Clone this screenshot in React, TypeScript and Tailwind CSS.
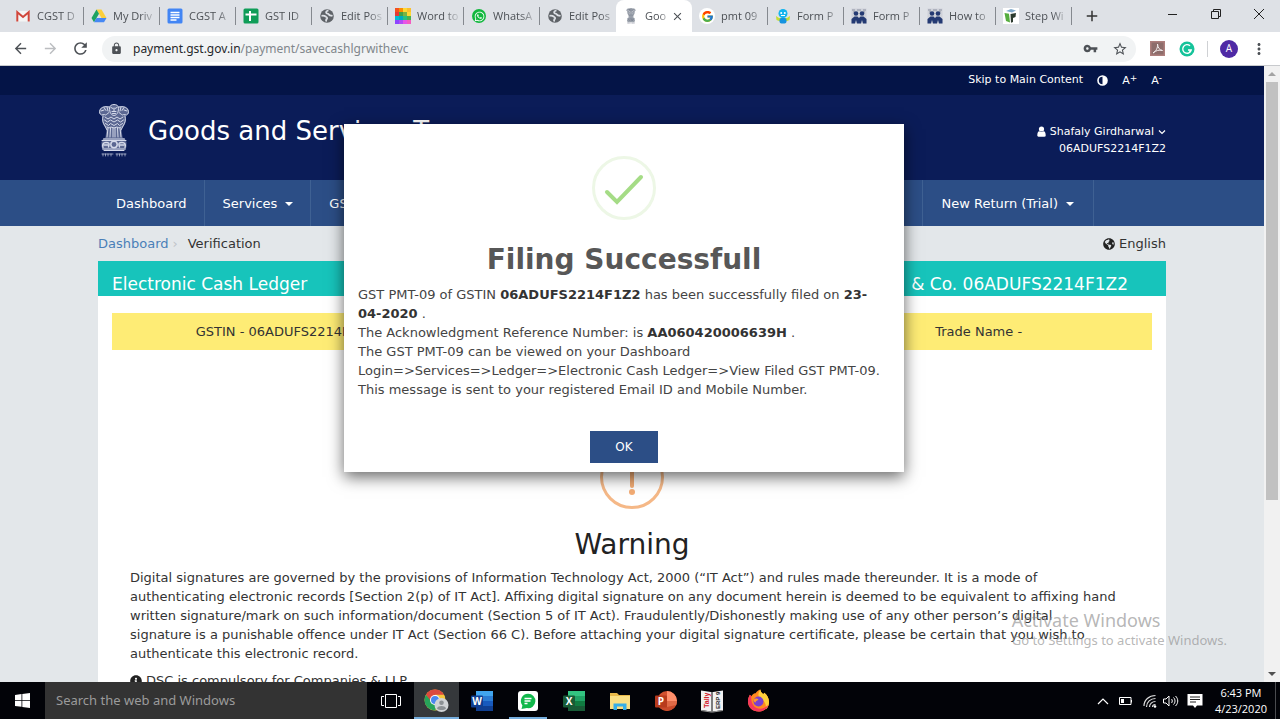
import type { ReactNode } from "react";
import {
  MdArrowBack,
  MdArrowForward,
  MdRefresh,
  MdLock,
  MdVpnKey,
  MdStarBorder,
  MdMoreVert,
  MdAdd,
  MdClose,
} from "react-icons/md";
import { FcGoogle } from "react-icons/fc";
import { FaWhatsapp, FaGlobeAmericas, FaInfoCircle } from "react-icons/fa";

/* ---------- icons ---------- */

const GmailIcon = () => (
  <svg viewBox="0 0 16 16" className="h-4 w-4">
    <path d="M1.500 3h13v10.500h-13z" fill="#f4f4f4" />
    <path d="M2.300 13.500V4.200L8 9l5.700-4.800v9.300" fill="none" stroke="#d0463b" strokeWidth="2" />
  </svg>
);

const DriveIcon = () => (
  <svg viewBox="0 0 16 16" className="h-4 w-4">
    <path d="M5.500 1.500h5l5 8.500h-5z" fill="#fbcf3b" />
    <path d="M5.500 1.500L.5 10 3 14.200l5-8.500z" fill="#1da362" />
    <path d="M3 14.200L5.500 10h10L13 14.200z" fill="#4688f4" />
  </svg>
);

const DocsIcon = () => (
  <svg viewBox="0 0 16 16" className="h-4 w-4">
    <rect x=".5" y=".5" width="15" height="15" rx="1.500" fill="#4285f4" />
    <path d="M3.500 4.500h9M3.500 7h9M3.500 9.500h9M3.500 12h6" stroke="#fff" strokeWidth="1.400" />
  </svg>
);

const SheetsIcon = () => (
  <svg viewBox="0 0 16 16" className="h-4 w-4">
    <rect x=".5" y=".5" width="15" height="15" rx="1.500" fill="#0f9d58" />
    <path d="M2.500 6.500h11M7 3v10" stroke="#fff" strokeWidth="2" />
  </svg>
);

const GlobeIcon = () => (
  <svg viewBox="0 0 16 16" className="h-4 w-4">
    <circle cx="8" cy="8" r="6.800" fill="#5f6368" />
    <path
      d="M2.500 7.800c2-.3 3.500.2 4.500 1 1.500.7 1.500 2 .3 2.600L7 13.500M9.500 2.500C7.500 3 6.500 4 7.500 5.200c1.300.6 2.200.3 2.600 1.600.9 1 2.200.6 3.400 1"
      fill="none"
      stroke="#dee1e6"
      strokeWidth="1.800"
    />
  </svg>
);

const mosaic = [
  "#f4511e", "#fb8c00", "#fdd835", "#fbc02d",
  "#e53935", "#43a047", "#7cb342", "#fdd835",
  "#00bcd4", "#00acc1", "#26c281", "#4caf50",
  "#8e44ff", "#b14cf5", "#e754e8", "#f45cc0",
];

const MosaicIcon = () => (
  <svg viewBox="0 0 16 16" className="h-4 w-4" shapeRendering="crispEdges">
    {mosaic.map((fill, i) => (
      <rect key={i} x={(i % 4) * 4} y={Math.floor(i / 4) * 4} width="4" height="4" fill={fill} />
    ))}
  </svg>
);

const WhatsAppIcon = () => (
  <span className="flex h-3.5 w-3.5 items-center justify-center rounded-full bg-[#12b83e] text-white">
    <FaWhatsapp size={11} />
  </span>
);

const GoogleIcon = () => (
  <span className="flex h-4 w-4 items-center justify-center rounded-full bg-white">
    <FcGoogle size={13} />
  </span>
);

const RobotIcon = () => (
  <svg viewBox="0 0 16 16" className="h-4 w-4">
    <path d="M1 8l3 2h8l3-2-.5 4-2.500 1h-8l-2.500-1z" fill="#c5dc34" />
    <circle cx="8" cy="5.500" r="4.500" fill="#12b4ee" />
    <rect x="4.500" y="10" width="7" height="5.500" rx="2" fill="#1593df" />
    <circle cx="6.200" cy="5" r="1" fill="#fff" />
    <circle cx="9.800" cy="5" r="1" fill="#fff" />
    <path d="M6 7.500h4" stroke="#fff" />
  </svg>
);

const PeopleIcon = () => (
  <svg viewBox="0 0 16 16" className="h-4 w-4">
    <rect x=".5" y=".5" width="15" height="15" fill="#cfd2d9" />
    <path d="M1 2h3M6 2h4M12 2h3M2 4h2M12 4h2" stroke="#8d93a3" />
    <g fill="#243a73">
      <circle cx="5" cy="5.500" r="2.300" />
      <circle cx="11" cy="5.500" r="2.300" />
      <path d="M.5 15.500V11l3-2.500h3L8 10l1.500-1.500h3l3 2.500v4.500h-3.500L11 12l-1 3.500H6L5 12l-1 3.500z" />
    </g>
  </svg>
);

const StepIcon = () => (
  <svg viewBox="0 0 16 16" className="h-4 w-4">
    <rect width="16" height="16" fill="#fff" />
    <path d="M3 3l5-2 5 1.500-4 2z" fill="#7ea8c9" />
    <path d="M1.500 5l4.500.8 1 8.700-4-1.500z" fill="#55ad3e" />
    <path d="M7.500 6l5.500-1-.5 4-2.500 1v4l-2 .8z" fill="#2c3b2f" />
  </svg>
);

const ContrastIcon = () => (
  <svg viewBox="0 0 11 11" className="h-[11px] w-[11px]">
    <circle cx="5.500" cy="5.500" r="4.500" fill="none" stroke="#fff" strokeWidth="1.600" />
    <path d="M5.500 1a4.500 4.500 0 0 1 0 9z" fill="#fff" />
  </svg>
);

const UserIcon = () => (
  <svg viewBox="0 0 9 11" className="h-[11px] w-[9px]" fill="#fff">
    <circle cx="4.500" cy="3" r="2.600" />
    <path d="M.3 9.500C.3 7 1 5.300 2.300 5.300c1.400.9 3 .9 4.400 0C8 5.300 8.700 7 8.700 9.500c0 .8-.5 1.200-1.200 1.200h-6C.8 10.700.3 10.300.3 9.500z" />
  </svg>
);

/* Four-lion emblem, used in the header and as the favicon */
const Emblem = ({ className, color }: { className: string; color: string }) => (
  <svg viewBox="0 0 32 54" className={className} fill="none" stroke={color} strokeLinecap="round">
    <path
      d="M11 2.500C12 .5 20 .5 21 2.500c4-1 8 0 9.500 3.500 1 3-.5 4.500-3 5.500 1 4 .5 8-2 11l-2 3 1 8 2.500 1.500 1.500 3v5l-2 3h-21l-2-3v-5L5 35l2.500-1.500 1-8-2-3c-2.500-3-3-7-2-11-2.500-1-4-2.500-3-5.500C3 2.500 7 1.500 11 2.500z"
      fill={color}
      fillOpacity=".4"
      stroke="none"
    />
    <g strokeWidth="1">
      <path d="M11.500 4.500c0-3 2-4 4.500-4s4.500 1 4.500 4c0 4-2 7-4.500 7s-4.500-3-4.500-7z" />
      <path d="M13 3.500l2 1M19 3.500l-2 1M14 7.500h4M14.500 9.500h3M16 4v3" />
      <path d="M11 3c-4-1-8 0-9 3-1 2-.5 4 1.500 5l3-.5C7 12 9 10 11 8.500M21 3c4-1 8 0 9 3 1 2 .5 4-1.500 5l-3-.5C25 12 23 10 21 8.500" />
      <path d="M3 7l3-1M6 3.500l2 3M29 7l-3-1M26 3.500l-2 3M9 3l1 4M23 3l-1 4" />
      <path d="M5 12c-1 4 0 7 2 10l2 4M27 12c1 4 0 7-2 10l-2 4" />
      <path d="M7 13l3 2 3-2 3 2 3-2 3 2 3-2M6.500 16l3 2 3-2 3.500 2 3.500-2 3 2 3-2M7.500 19.500l3 2 2-2 3.500 2 3.500-2 2 2 3-2M9 23l2 1 2-1 3 1 3-1 2 1 2-1" />
      <path d="M10 24l-1 9M12.500 24l-.5 9M15 24v9M17 24v9M19.500 24l.5 9M22 24l1 9" />
      <path d="M5.500 35h21M4 36.500h24M4.500 45h23M6 46.500h20" />
      <circle cx="16" cy="40.500" r="3.200" strokeWidth="1.500" />
      <path d="M5 43.500c-1-3 0-5 3-5s4 1 2.500 4.500M27 43.500c1-3 0-5-3-5s-4 1-2.500 4.500M6 41h4M26 41h-4" strokeWidth="1.400" />
    </g>
    <path
      d="M4 50h11M18 50h10M5 50v2M7.500 50v2M10 50v2M13 50v2M19 50v2M21.500 50v2M24 50v2M27 50v2"
      strokeWidth=".8"
      opacity=".8"
    />
  </svg>
);

const ChromeIcon = () => (
  <svg viewBox="0 0 26 24" className="h-6 w-7">
    <circle cx="11" cy="11" r="10.500" fill="#f4c63d" />
    <path d="M1.900 5.800A10.500 10.500 0 0 1 20.100 5.800H11L6.500 13.500z" fill="#dc4a3d" />
    <path d="M1.900 5.800A10.500 10.500 0 0 0 11 21.500l4.500-8-4.500-2H6.500z" fill="#27a35a" />
    <circle cx="11" cy="11" r="5" fill="#fff" />
    <circle cx="11" cy="11" r="4" fill="#4a87ee" />
    <circle cx="17.500" cy="16" r="7" fill="#d0d3d6" />
    <circle cx="17.500" cy="13.800" r="2.300" fill="#8b9094" />
    <path d="M13 19.500c1-3.200 8-3.200 9 0-2 2-7 2-9 0z" fill="#8b9094" />
  </svg>
);

const OfficeIcon = ({ letter, shades }: { letter: string; shades: string[] }) => (
  <svg viewBox="0 0 24 22" className="h-[22px] w-6">
    <rect x="6" y="1" width="17" height="5" fill={shades[0]} />
    <rect x="6" y="6" width="17" height="5" fill={shades[1]} />
    <rect x="6" y="11" width="17" height="5" fill={shades[2]} />
    <rect x="6" y="16" width="17" height="5" fill={shades[3]} />
    <rect x="1" y="5.500" width="12" height="12" rx="1" fill={shades[3]} />
    <text x="7" y="15" textAnchor="middle" fontSize="10" fontWeight="700" fontFamily="Open Sans, sans-serif" fill="#fff">
      {letter}
    </text>
  </svg>
);

const PowerPointIcon = () => (
  <svg viewBox="0 0 24 22" className="h-[22px] w-6">
    <circle cx="13" cy="11" r="10" fill="#d35230" />
    <path d="M13 1a10 10 0 0 1 10 10H13z" fill="#ff8f6b" />
    <path d="M3 11h20a10 10 0 0 1-20 0z" fill="#c94a2a" />
    <path d="M13 11h10a10 10 0 0 1-1 4l-9 2z" fill="#e06a47" />
    <rect x="1" y="5.500" width="12" height="12" rx="1" fill="#b83b1d" />
    <text x="7" y="15" textAnchor="middle" fontSize="10" fontWeight="700" fontFamily="Open Sans, sans-serif" fill="#fff">
      P
    </text>
  </svg>
);

const ChatIcon = () => (
  <svg viewBox="0 0 20 20" className="h-5 w-5">
    <rect width="20" height="20" rx="3" fill="#fff" />
    <path d="M10 2.800a7.200 7.200 0 1 1-1 14.300l-5.500.9.900-3.600A7.200 7.200 0 0 1 10 2.800z" fill="#12b84c" />
    <path d="M6.500 7.500h7M6.500 10h6M6.500 12.500h3" stroke="#fff" strokeWidth="1.500" />
  </svg>
);

const FolderIcon = () => (
  <svg viewBox="0 0 22 20" className="h-5 w-[22px]">
    <path d="M1 2h7l2 2h11v14H1z" fill="#e9b949" />
    <path d="M1 5h20v13H1z" fill="#fbdf83" />
    <path d="M4.500 19v-6.500h13V19H14v-3.500H8V19z" fill="#38aee6" />
  </svg>
);

const TallyIcon = () => (
  <svg viewBox="0 0 24 24" className="h-6 w-6">
    <path d="M1 1.500l10 1.500 1 1 1-1 10-1.500V21l-10 1.500h-2L1 21z" fill="#f2f2f2" />
    <path d="M12 4v19" stroke="#555" strokeWidth="1.500" />
    <path d="M1 21.500l10 1.500h2l10-1.500" fill="none" stroke="#999" />
    <text transform="translate(9 19) rotate(-90)" fontSize="7" fontWeight="700" fontFamily="Liberation Sans, sans-serif" fill="#d4232b">
      Tally
    </text>
    <text transform="translate(20 20) rotate(-90)" fontSize="6" fontWeight="700" fontFamily="Liberation Sans, sans-serif" fill="#222">
      ERP 9
    </text>
  </svg>
);

const FirefoxIcon = () => (
  <svg viewBox="0 0 24 24" className="h-[23px] w-[23px]">
    <path d="M3 6l1.500 1.500C6 5 8 4.500 9 4.500c1-2 3-3.500 5-4 0 2 1 3 3 5l1-1.500c3 2 5 6 5 9.500C23 19.500 18 23.500 12 23.500S1 19 1 13C1 10 2 8 3 6z" fill="#ff8a1f" />
    <path d="M14 .5c0 2 1 3 3 5l1-1.500c3 2 5 6 5 9.500 0 3-1 5.500-3 7.500 0-7-3-10-7-12-2-2-1-6 1-8.500z" fill="#ffcf3a" />
    <path d="M1 13c0 6 5 10.500 11 10.500 5 0 9-2.500 10.500-7-4 4-9 5-13 3S4 12 4.500 7.500L3 6C2 8 1 10 1 13z" fill="#f5385c" />
    <circle cx="12" cy="13" r="5.200" fill="#7a3fd0" />
    <path d="M7 11c2-2 4-1 5 0-1 1.500-3 1-3 3-1.500 0-2-1.500-2-3z" fill="#ff9a2b" />
  </svg>
);

/* ---------- browser chrome ---------- */

interface Tab {
  title: string;
  icon: ReactNode;
  active?: boolean;
}

const tabs: Tab[] = [
  { title: "CGST D", icon: <GmailIcon /> },
  { title: "My Driv", icon: <DriveIcon /> },
  { title: "CGST A", icon: <DocsIcon /> },
  { title: "GST ID", icon: <SheetsIcon /> },
  { title: "Edit Pos", icon: <GlobeIcon /> },
  { title: "Word to", icon: <MosaicIcon /> },
  { title: "WhatsA", icon: <WhatsAppIcon /> },
  { title: "Edit Pos", icon: <GlobeIcon /> },
  { title: "Goo", icon: <Emblem className="h-4 w-4" color="#5b6475" />, active: true },
  { title: "pmt 09", icon: <GoogleIcon /> },
  { title: "Form P", icon: <RobotIcon /> },
  { title: "Form P", icon: <PeopleIcon /> },
  { title: "How to", icon: <PeopleIcon /> },
  { title: "Step Wi", icon: <StepIcon /> },
];

function TabStrip() {
  return (
    <div className="flex h-8 shrink-0 items-stretch bg-[#dee1e6] pl-2 text-[#4c5055]">
      {tabs.map((tab, i) => (
        <button
          key={i}
          className={
            tab.active
              ? "flex w-[76px] items-center rounded-t-lg bg-white pr-2 pl-[7px]"
              : "flex w-[76px] items-center pl-[7px]"
          }
        >
          <span className="flex w-4 shrink-0 justify-center">{tab.icon}</span>
          <span
            className={
              tab.active
                ? "ml-1.5 flex-1 text-left text-[11px] whitespace-nowrap [mask-image:linear-gradient(to_right,black_60%,transparent_120%)]"
                : "ml-1.5 flex-1 text-left text-[11px] whitespace-nowrap [mask-image:linear-gradient(to_right,black_65%,transparent_105%)]"
            }
          >
            {tab.title}
          </span>
          {tab.active && <MdClose size={13} className="ml-1 shrink-0" />}
          {!tab.active && !tabs[i + 1]?.active && <span className="ml-1 h-[18px] w-px shrink-0 bg-[#85898f]" />}
        </button>
      ))}
      <button aria-label="New tab" className="flex w-10 items-center justify-center text-[#333]">
        <MdAdd size={18} />
      </button>
      <div className="ml-auto flex items-center text-[#222]">
        <button aria-label="Minimize" className="flex h-8 w-[43px] items-center justify-center">
          <span className="mb-1 h-px w-[9px] bg-[#222]" />
        </button>
        <button aria-label="Restore" className="flex h-8 w-[43px] items-center justify-center pb-1">
          <svg viewBox="0 0 10 10" className="h-2.5 w-2.5" fill="none" stroke="currentColor">
            <path d="M.5 2.500h7v7h-7zM2.500 2.500v-2h7v7h-2" />
          </svg>
        </button>
        <button aria-label="Close" className="flex h-8 w-[43px] items-center justify-center pb-1">
          <svg viewBox="0 0 10 10" className="h-2.5 w-2.5" stroke="currentColor">
            <path d="M0 0l10 10M10 0L0 10" />
          </svg>
        </button>
      </div>
    </div>
  );
}

function Toolbar() {
  return (
    <div className="flex h-[34px] shrink-0 items-center border-b border-[#c8cacd] bg-white px-3 text-[#4d5156]">
      <button aria-label="Back"><MdArrowBack size={17} /></button>
      <button aria-label="Forward" className="ml-[13px] text-[#bbbdc0]"><MdArrowForward size={17} /></button>
      <button aria-label="Reload" className="ml-3"><MdRefresh size={19} /></button>
      <div className="ml-3 flex h-[26px] flex-1 items-center rounded-full bg-[#f1f3f4] px-2">
        <MdLock size={13} className="text-[#4d5156]" />
        <a href="#" className="ml-2.5 font-['Noto_Sans',sans-serif] text-xs text-[#80868b]">
          <span className="text-[#26282b]">payment.gst.gov.in</span>/payment/savecashlgrwithevc
        </a>
        <button aria-label="Passwords" className="ml-auto"><MdVpnKey size={15} /></button>
        <button aria-label="Bookmark" className="ml-3.5"><MdStarBorder size={16} /></button>
      </div>
      <button aria-label="PDF" className="ml-3.5">
        <svg viewBox="0 0 15 15" className="h-[15px] w-[15px]">
          <rect width="15" height="15" fill="#ad7e7c" />
          <rect x="1.500" y="1.500" width="12" height="12" fill="#8d6d6b" />
          <path d="M3 12c3-2 5-5 4.500-9C8 7 9.500 9 12.500 9.500 9 8.500 6 9.500 3 12z" fill="none" stroke="#f4eeee" />
        </svg>
      </button>
      <button aria-label="Grammar" className="ml-3.5">
        <svg viewBox="0 0 16 16" className="h-4 w-4">
          <circle cx="8" cy="8" r="7.500" fill="#15c39a" />
          <path d="M11 4.800A4.300 4.300 0 1 0 12.200 9H9M10.500 11l1.800-2" fill="none" stroke="#fff" strokeWidth="1.400" />
        </svg>
      </button>
      <span className="ml-3 h-4 w-px bg-[#cfd1d4]" />
      <button className="ml-3 flex h-[18px] w-[18px] items-center justify-center rounded-full bg-[#4f2aa5] text-[10px] text-white">
        A
      </button>
      <button aria-label="Menu" className="ml-3"><MdMoreVert size={18} /></button>
    </div>
  );
}

/* ---------- GST portal page ---------- */

const Caret = () => (
  <span className="ml-2 inline-block border-x-4 border-t-4 border-x-transparent border-t-white align-middle" />
);

const navItems = [
  { label: "Dashboard", caret: false },
  { label: "Services", caret: true },
  { label: "GST Law", caret: false },
  { label: "Downloads", caret: true },
];

function PortalHeader() {
  return (
    <header className="text-white">
      <div className="bg-[#041447]">
        <div className="mx-auto flex h-[29px] max-w-[1068px] items-center justify-end pr-1 text-[11px]">
          <a href="#">Skip to Main Content</a>
          <button aria-label="Contrast" className="ml-3.5"><ContrastIcon /></button>
          <button className="ml-3.5 flex items-start leading-4">
            A<span className="text-[9px] leading-[10px]">+</span>
          </button>
          <button className="ml-3.5 flex items-start leading-4">
            A<span className="text-[9px] leading-[10px]">-</span>
          </button>
        </div>
      </div>
      <div className="bg-[#0b1c58]">
        <div className="mx-auto flex h-[85px] max-w-[1068px] items-start justify-between">
          <div className="flex items-start pt-[9px]">
            <Emblem className="h-[54px] w-8" color="#d5daea" />
            <h1 className="ml-[18px] pt-[9px] text-[26px] leading-9">Goods and Services Tax</h1>
          </div>
          <div className="pt-7 text-right text-[11px] leading-[17px]">
            <button className="flex items-center gap-1">
              <UserIcon />
              Shafaly Girdharwal
              <svg viewBox="0 0 8 6" className="h-1.5 w-2" fill="none" stroke="#fff" strokeWidth="1.200">
                <path d="M1 1.500l3 3 3-3" />
              </svg>
            </button>
            <p>06ADUFS2214F1Z2</p>
          </div>
        </div>
      </div>
      <nav className="bg-[#2c4e86]">
        <div className="mx-auto flex h-[46px] max-w-[1068px] items-stretch pr-[72px] text-[13px]">
          {navItems.map((item) => (
            <a
              key={item.label}
              href="#"
              className="flex items-center border-r border-[#3f6193] pt-px pr-[17px] pl-[18px] whitespace-nowrap"
            >
              {item.label}
              {item.caret && <Caret />}
            </a>
          ))}
          <a
            href="#"
            className="flex flex-1 items-center justify-end border-r border-[#3f6193] px-[17px] pt-px whitespace-nowrap text-[#f2e08c]"
          >
            e-Way Bill System
          </a>
          <a
            href="#"
            className="flex items-center border-r border-[#3f6193] px-[19px] pt-px whitespace-nowrap"
          >
            New Return (Trial)
            <Caret />
          </a>
        </div>
      </nav>
    </header>
  );
}

function PortalContent() {
  return (
    <main className="mx-auto max-w-[1068px] text-[13px] text-[#333]">
      <div className="flex h-[35px] items-center justify-between">
        <div className="flex items-center">
          <a href="#" className="text-[#4a7fb8]">Dashboard</a>
          <span className="ml-1 text-[#bfc3c8]">›</span>
          <span className="ml-2.5">Verification</span>
        </div>
        <button className="flex items-center gap-1">
          <FaGlobeAmericas size={12} className="text-[#222]" />
          English
        </button>
      </div>
      <div className="flex h-[35px] items-end justify-between bg-[#17c4bb] pr-[38px] pl-3.5 text-[17px] leading-6 text-white">
        <h2>Electronic Cash Ledger</h2>
        <p>& Co. 06ADUFS2214F1Z2</p>
      </div>
      <div className="bg-white px-3.5 pt-[17px] pb-10">
        <div className="grid h-[37px] grid-cols-3 items-center bg-[#feec75] text-center">
          <p>GSTIN - 06ADUFS2214F1Z2</p>
          <p className="col-start-3">Trade Name -</p>
        </div>
        <svg viewBox="0 0 64 64" className="mx-auto mt-[95px] h-16 w-16">
          <circle cx="32" cy="32" r="30.500" fill="none" stroke="#f5b887" strokeWidth="3" />
          <path d="M32 14v27" stroke="#f3ac74" strokeWidth="4" strokeLinecap="round" />
          <circle cx="32" cy="47" r="3" fill="#f3ac74" />
        </svg>
        <h2 className="mt-[18px] text-center text-[28px] leading-9 text-[#222]">Warning</h2>
        <p className="mt-[5px] px-[18px] leading-[19px]">
          Digital signatures are governed by the provisions of Information Technology Act, 2000 (“IT Act”) and rules
          made thereunder. It is a mode of authenticating electronic records [Section 2(p) of IT Act]. Affixing digital
          signature on any document herein is deemed to be equivalent to affixing hand written signature/mark on such
          information/document (Section 5 of IT Act). Fraudulently/Dishonestly making use of any other person’s digital
          <br />
          signature is a punishable offence under IT Act (Section 66 C). Before attaching your digital signature
          certificate, please be certain that you wish to
          <br />
          authenticate this electronic record.
        </p>
        <p className="mt-2 flex items-center gap-1 px-[18px] leading-[19px]">
          <FaInfoCircle size={12} className="text-[#222]" />
          DSC is compulsory for Companies & LLP
        </p>
      </div>
    </main>
  );
}

function SuccessDialog() {
  return (
    <div className="absolute inset-0 flex items-start justify-center pt-[58px] pr-4">
      <div
        role="dialog"
        aria-labelledby="dialog-title"
        className="w-[560px] bg-white px-3.5 pt-8 pb-[9px] text-[13px] leading-[19px] text-[#444] shadow-[0_5px_15px_rgba(0,0,0,0.6)]"
      >
        <svg viewBox="0 0 64 64" className="mx-auto h-16 w-16" fill="none">
          <circle cx="32" cy="32" r="30.500" stroke="#edf7e6" strokeWidth="3" />
          <path d="M15 36l10 10 24-25" stroke="#a5dc86" strokeWidth="4" strokeLinecap="round" />
        </svg>
        <h2 id="dialog-title" className="mt-5 text-center text-[28px] leading-10 font-bold text-[#575757]">
          Filing Successfull
        </h2>
        <p className="mt-[5px]">
          GST PMT-09 of GSTIN <b className="text-[#333]">06ADUFS2214F1Z2</b> has been successfully filed on{" "}
          <b className="text-[#333]">23-04-2020</b> .
        </p>
        <p>
          The Acknowledgment Reference Number: is <b className="text-[#333]">AA060420006639H</b> .
        </p>
        <p>The GST PMT-09 can be viewed on your Dashboard</p>
        <p>Login=&gt;Services=&gt;Ledger=&gt;Electronic Cash Ledger=&gt;View Filed GST PMT-09.</p>
        <p>This message is sent to your registered Email ID and Mobile Number.</p>
        <button className="mx-auto mt-8 block h-8 w-[68px] bg-[#2c4e86] text-xs text-white">OK</button>
      </div>
    </div>
  );
}

function Scrollbar() {
  return (
    <div className="flex w-4 shrink-0 flex-col items-center justify-between bg-[#f1f1f1]">
      <div className="flex w-full flex-1 flex-col items-center">
        <span className="my-1.5 border-x-4 border-b-4 border-x-transparent border-b-[#a3a3a3]" />
        <span className="h-[69%] w-3 bg-[#c1c1c1]" />
      </div>
      <span className="mb-1.5 border-x-4 border-t-4 border-x-transparent border-t-[#505050]" />
    </div>
  );
}

/* ---------- taskbar ---------- */

const apps = [
  { name: "Chrome", icon: <ChromeIcon />, state: "active" },
  { name: "Word", icon: <OfficeIcon letter="W" shades={["#41a5ee", "#2b7cd3", "#185abd", "#103f91"]} />, state: "" },
  { name: "Chat", icon: <ChatIcon />, state: "open" },
  { name: "Excel", icon: <OfficeIcon letter="X" shades={["#33c481", "#21a366", "#107c41", "#185c37"]} />, state: "" },
  { name: "Explorer", icon: <FolderIcon />, state: "" },
  { name: "PowerPoint", icon: <PowerPointIcon />, state: "" },
  { name: "Tally", icon: <TallyIcon />, state: "" },
  { name: "Firefox", icon: <FirefoxIcon />, state: "" },
];

const appClass: Record<string, string> = {
  active: "flex w-[45px] items-center justify-center border-b-2 border-[#76aede] bg-[#35383b] pt-0.5",
  open: "mx-1 flex w-[38px] items-center justify-center border-b-2 border-[#76aede] pt-0.5",
  "": "flex w-[46px] items-center justify-center",
};

function Taskbar() {
  return (
    <div className="flex h-[37px] shrink-0 items-stretch bg-[#020308] text-white">
      <button aria-label="Start" className="flex w-[45px] items-center justify-center">
        <svg viewBox="0 0 15 15" className="h-[15px] w-[15px]" fill="#fff">
          <path d="M0 2l6.500-1v6H0zM7.300 .9L15 0v7H7.300zM0 7.800h6.500v6L0 13zM7.300 7.800H15V15l-7.700-1z" />
        </svg>
      </button>
      <input
        type="text"
        aria-label="Search"
        placeholder="Search the web and Windows"
        className="w-[322px] bg-[#333] px-[11px] font-['Noto_Sans',sans-serif] text-[13px] placeholder:text-[#9b9b9b]"
      />
      <button aria-label="Task view" className="flex w-[47px] items-center justify-center">
        <svg viewBox="0 0 20 14" className="h-3.5 w-5" fill="none" stroke="#fff">
          <path d="M4.500 .5h11v13h-11zM3 2.500H.5v9H3M17 2.500h2.500v9H17" />
        </svg>
      </button>
      {apps.map((app) => (
        <button key={app.name} aria-label={app.name} className={appClass[app.state]}>
          {app.icon}
        </button>
      ))}
      <div className="ml-auto flex items-center">
        <svg viewBox="0 0 12 8" className="h-2 w-3" fill="none" stroke="#fff" strokeWidth="1.200">
          <path d="M1 7l5-5 5 5" />
        </svg>
        <svg viewBox="0 0 14 10" className="ml-2.5 h-2.5 w-3.5" fill="none" stroke="#fff">
          <path d="M.5 1.500h11.500v7H.5zM12.500 4v2.500" />
          <path d="M2 3h3v4H2z" fill="#fff" stroke="none" />
        </svg>
        <svg viewBox="0 0 14 14" className="ml-2.5 h-3.5 w-3.5" fill="none" stroke="#ddd" strokeWidth="1.200">
          <path d="M1 12C1 6 6 1.500 12.500 1.500M3.500 13c0-5 4-8.500 9-8.500M6.500 13c0-3 2.500-5.500 6-5.500M9.500 13c0-1.500 1-2.500 3-2.500" />
          <circle cx="12" cy="12.500" r="1.300" fill="#fff" stroke="none" />
        </svg>
        <svg viewBox="0 0 16 14" className="ml-1.5 h-3.5 w-4" fill="none" stroke="#fff">
          <path d="M.5 5h2.500l3-3v10L3 9H.5zM8.500 5c1 1 1 3 0 4M10.500 3.500c2 2 2 5 0 7M12.500 2c3 3 3 7 0 10" />
        </svg>
        <svg viewBox="0 0 16 16" className="ml-2 h-4 w-4">
          <path d="M.5 1h15v11.500H10L8 15l-2-2.500H.5z" fill="#fff" />
          <path d="M3 4h10M3 6.500h10M3 9h6" stroke="#222" />
        </svg>
        <div className="mr-2 ml-3 text-center text-[11px] leading-4">
          <p>6:43 PM</p>
          <p>4/23/2020</p>
        </div>
        <span className="mr-1 h-[37px] w-px bg-[#4a4b4f]" />
      </div>
    </div>
  );
}

export default function App() {
  return (
    <div className="flex h-screen flex-col overflow-hidden font-['Open_Sans',sans-serif]">
      <TabStrip />
      <Toolbar />
      <div className="relative flex min-h-0 flex-1 font-['DejaVu_Sans',sans-serif]">
        <div className="relative min-w-0 flex-1 overflow-hidden bg-[#e3e7ea]">
          <PortalHeader />
          <PortalContent />
          <SuccessDialog />
        </div>
        <Scrollbar />
        {/* Windows activation watermark */}
        <div className="pointer-events-none absolute right-[53px] bottom-8 font-['Noto_Sans',sans-serif] text-[#8e8e8e]/65">
          <p className="text-lg leading-[22px]">Activate Windows</p>
          <p className="text-[13px] leading-[19px]">Go to Settings to activate Windows.</p>
        </div>
      </div>
      <Taskbar />
    </div>
  );
}
